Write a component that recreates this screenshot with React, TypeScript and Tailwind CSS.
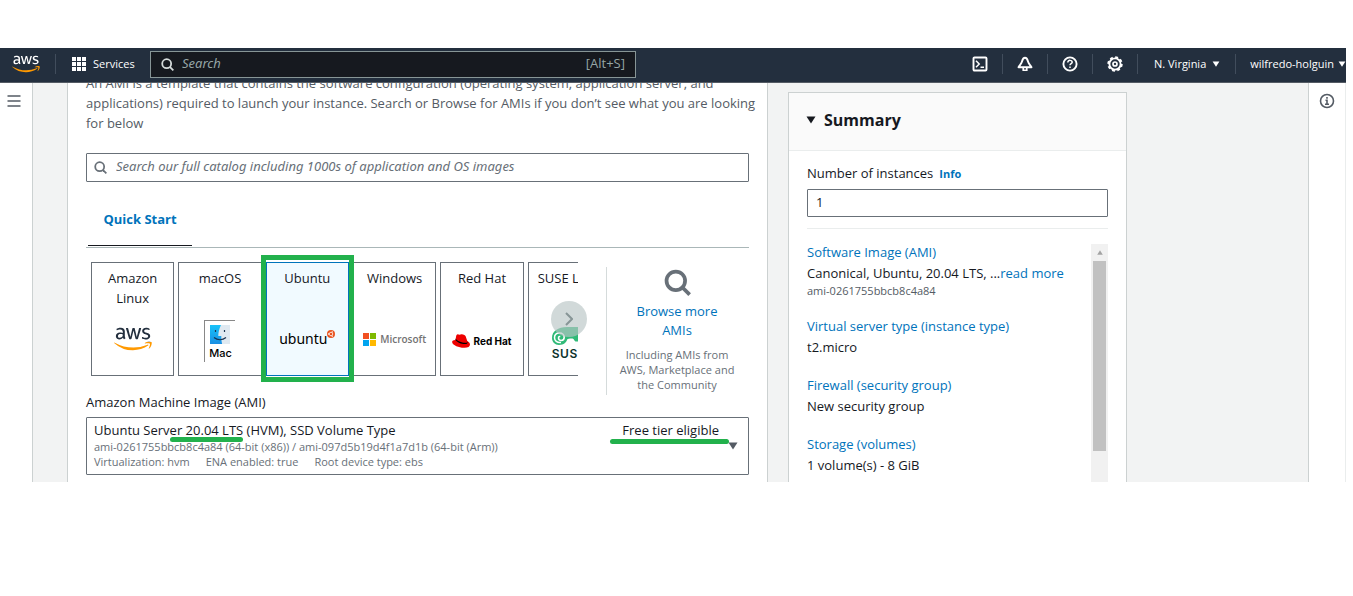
import React from "react";
import { FaAws } from "react-icons/fa";

function Caret({ className = "" }: { className?: string }) {
  return (
    <svg viewBox="0 0 10 8" className={className} aria-hidden="true">
      <path d="M0.5 0.5h9L5 7.5z" fill="currentColor" />
    </svg>
  );
}

function Magnifier({ className = "" }: { className?: string }) {
  return (
    <svg viewBox="0 0 16 16" className={className} fill="none" stroke="currentColor" strokeWidth="2.200" aria-hidden="true">
      <circle cx="7" cy="7" r="5.500" />
      <path d="M10.8 10.800 15.200 15.200" />
    </svg>
  );
}

function AwsMark({ id, ink, className = "" }: { id: string; ink: string; className?: string }) {
  return (
    <span className={className}>
      <svg width="0" height="0" className="absolute" aria-hidden="true">
        <linearGradient id={id} x1="0" y1="0" x2="0" y2="1">
          <stop offset="0.63" stopColor={ink} />
          <stop offset="0.63" stopColor="#ff9900" />
        </linearGradient>
      </svg>
      <FaAws className="block h-full w-full" fill={`url(#${id})`} />
    </span>
  );
}

function MacLogo() {
  return (
    <div className="flex h-[42px] w-[31px] flex-col items-center border-t border-l border-[#888] pt-1">
      <svg viewBox="0 0 20 19" className="h-[19px] w-5" aria-hidden="true">
        <defs>
          <linearGradient id="finder" x1="0" y1="0" x2="0" y2="1">
            <stop offset="0" stopColor="#17c3fa" />
            <stop offset="1" stopColor="#1a8fe3" />
          </linearGradient>
        </defs>
        <rect width="20" height="19" fill="#dfe9f1" />
        <path d="M0 0h11C9 4 8.300 8 8.300 11h3c0 3 .2 5 .8 8H0z" fill="url(#finder)" />
        <path d="M5.500 5v2M14.500 5v2M4 12.500c3.500 3 8.500 3 12 0" fill="none" stroke="#1b3350" strokeWidth="1.200" />
      </svg>
      <span className="mt-0.5 font-[Inter] text-[11px] leading-[14px] font-medium text-black">Mac</span>
    </div>
  );
}

function UbuntuLogo() {
  return (
    <div className="flex items-start text-black">
      <span className="font-['Noto_Sans'] text-sm leading-[18px]">ubuntu</span>
      <svg viewBox="0 0 16 16" className="h-2 w-2" aria-hidden="true">
        <circle cx="8" cy="8" r="8" fill="#e95420" />
        <circle cx="8" cy="8" r="3.500" fill="none" stroke="#fff" strokeWidth="1.500" />
        <circle cx="3" cy="8" r="1.300" fill="#fff" />
        <circle cx="10.500" cy="3.700" r="1.300" fill="#fff" />
        <circle cx="10.500" cy="12.300" r="1.300" fill="#fff" />
      </svg>
    </div>
  );
}

function MicrosoftLogo() {
  return (
    <div className="flex items-center gap-1">
      <svg viewBox="0 0 13 13" className="h-[13px] w-[13px]" aria-hidden="true">
        <path d="M0 0h6v6H0z" fill="#f25022" />
        <path d="M7 0h6v6H7z" fill="#7fba00" />
        <path d="M0 7h6v6H0z" fill="#00a4ef" />
        <path d="M7 7h6v6H7z" fill="#ffb900" />
      </svg>
      <span className="font-['Open_Sans'] text-[10px] leading-4 font-semibold text-[#737373]">Microsoft</span>
    </div>
  );
}

function RedHatLogo() {
  return (
    <div className="flex items-center gap-[3px] text-black">
      <svg viewBox="0 0 36 28" className="h-3.5 w-[18px]" aria-hidden="true">
        <path
          d="M7 12C1 12.500 0 14.500.3 16.500 1.500 23 15 28 25 27.500c7 0 11-2.500 11-6.500 0-3-2.500-5.500-5.500-7L27.500 5C26.500 2 25 2 21.500 1 18 0 16.500 1.500 15 1.500 13 1.500 12.500.2 10.500 1 9 1.500 8.500 3 8 6z"
          fill="#e00"
        />
        <path d="M7 12c3 5 14 9 21 8 3-.3 4-2.500 2.500-6 .4 3-1 4-4 3.700C19 17.500 10 14 7.400 9z" fill="#000" />
      </svg>
      <span className="font-[Inter] text-[10px] leading-4 font-bold">Red Hat</span>
    </div>
  );
}

function SuseLogo() {
  return (
    <div className="flex flex-col items-start">
      <svg viewBox="0 0 42 18" className="h-[18px] w-[42px]" aria-hidden="true">
        <path
          d="M0 11C0 4 6 0 15 0h12c6 0 11 3 13 7 .5 2-.5 5-3 5h-9c-2 0-2 2-1 2.500h-3.500c-1 0-1.500-3-3-3-2.500 0-2.500 0-5 .5-1 3-3.500 6-8.500 6C3 18 0 15 0 11z"
          fill="#30ba78"
        />
        <path
          d="M9 15.500c-4 .5-6.500-2-6.500-4.700C2.500 8 4.500 6 7.500 6s4.700 2 4.700 4.200c0 2-1.400 3.200-3 3.200S6.500 12.300 6.500 11s1-1.700 1.800-1.500"
          fill="none"
          stroke="#fff"
          strokeWidth="1.500"
        />
        <circle cx="34" cy="6" r="2" fill="#fff" />
      </svg>
      <span className="mt-[3px] font-[Inter] text-xs leading-3 font-semibold tracking-wider text-[#0c322c]">SUSE</span>
    </div>
  );
}

function Tile({ name, children, selected = false }: { name: string; children: React.ReactNode; selected?: boolean }) {
  return (
    <div className="relative">
      <button
        type="button"
        aria-pressed={selected}
        className={
          selected
            ? "relative block h-[114px] w-full border border-[#0073bb] bg-[#f1faff]"
            : "relative block h-[114px] w-full border border-[#687078] bg-white"
        }
      >
        <span className="absolute inset-x-0 top-[5px] px-2 leading-5">{name}</span>
        <span className="absolute inset-x-0 top-[54px] flex h-11 items-center justify-center">{children}</span>
      </button>
      {selected && <span className="pointer-events-none absolute -inset-x-[5px] -top-[7px] -bottom-[6px] z-10 border-[5px] border-[#22b14c]" />}
    </div>
  );
}

function HeaderIcon({ label, children }: { label: string; children: React.ReactNode }) {
  return (
    <button type="button" aria-label={label} className="flex h-5 w-[45px] items-center justify-center border-r border-[#414d5c]">
      <svg viewBox="0 0 16 16" className="h-4 w-4" fill="none" stroke="currentColor" strokeWidth="1.900">
        {children}
      </svg>
    </button>
  );
}

function TopBar() {
  return (
    <header className="flex h-[35px] items-center border-b border-[#545b64] bg-[#232f3e] pb-0.5 text-[11px] text-white">
      <a href="#home" aria-label="AWS" className="flex h-5 w-14 items-center border-r border-[#414d5c] pl-3">
        <AwsMark id="awsLight" ink="#ffffff" className="block h-[22px] w-7" />
      </a>
      <button type="button" className="flex w-[94px] items-center gap-[7px] pl-4">
        <svg viewBox="0 0 14 14" className="h-3.5 w-3.5" fill="currentColor" aria-hidden="true">
          <path d="M0 0h4v4H0zM5 0h4v4H5zM10 0h4v4h-4zM0 5h4v4H0zM5 5h4v4H5zM10 5h4v4h-4zM0 10h4v4H0zM5 10h4v4H5zM10 10h4v4h-4z" />
        </svg>
        Services
      </button>
      <label className="flex h-[27px] w-[486px] items-center border border-[#879596] bg-[#16191f] px-2.5 text-[13px] text-[#95a5a6]">
        <Magnifier className="h-[13px] w-[13px] text-[#d5dbdb]" />
        <input
          aria-label="Search"
          placeholder="Search"
          className="ml-2 min-w-0 flex-1 bg-transparent font-['Noto_Sans'] italic outline-none placeholder:text-[#95a5a6]"
        />
        <span>[Alt+S]</span>
      </label>
      <div className="ml-auto flex items-center whitespace-nowrap">
        <HeaderIcon label="CloudShell">
          <rect x="1.500" y="1.500" width="13" height="13" rx="1" />
          <path d="M4 4.800 7.200 8 4 11.200M8.500 11.200H12" strokeWidth="1.500" />
        </HeaderIcon>
        <HeaderIcon label="Notifications">
          <path d="M8 1.800C6 1.800 5.500 3.500 5 5.500 4.500 7.500 3 9 1.500 11.300h13C13 9 11.500 7.500 11 5.500 10.500 3.500 10 1.800 8 1.800z" strokeLinejoin="round" />
          <path d="M6.200 11.500v2.800h3.600v-2.800" strokeWidth="1.600" />
        </HeaderIcon>
        <HeaderIcon label="Help">
          <circle cx="8" cy="8" r="6.600" />
          <path d="M5.800 6.500c0-3 4.400-2.600 4.400-.2C10.200 7.700 8 7.700 8 9.300M8 10.500v1.600" strokeWidth="1.500" />
        </HeaderIcon>
        <HeaderIcon label="Settings">
          <circle cx="8" cy="8" r="5.600" />
          <circle cx="8" cy="8" r="6.800" strokeWidth="1.800" strokeDasharray="2.900 2.440" />
          <circle cx="8" cy="8" r="2" strokeWidth="1.700" />
        </HeaderIcon>
        <button type="button" className="flex h-5 items-center gap-1.5 border-r border-[#414d5c] pr-[15px] pl-4">
          N. Virginia
          <Caret className="h-1.5 w-2" />
        </button>
        <button type="button" className="flex items-center gap-1 pl-3.5">
          wilfredo-holguin
          <Caret className="h-1.5 w-2" />
        </button>
      </div>
    </header>
  );
}

function BrowseMore() {
  return (
    <div className="flex h-32 flex-1 flex-col items-center border-l border-[#d5dbdb] pr-0.5 text-center">
      <Magnifier className="mt-0.5 h-[27px] w-[27px] text-[#687078]" />
      <a href="#browse" className="mt-1.5 w-24 leading-[19px] text-[#0073bb]">
        Browse more AMIs
      </a>
      <p className="mt-[7px] w-[120px] text-[11px] leading-[15px] text-[#687078]">Including AMIs from AWS, Marketplace and the Community</p>
    </div>
  );
}

function ImagePanel() {
  return (
    <main className="max-w-[701px] flex-1 overflow-hidden border-x border-[#ccd1d1] bg-white px-[18px]">
      <p className="-mt-[10px] -mr-4 leading-5 text-[#545b64]">
        An AMI is a template that contains the software configuration (operating system, application server, and
        <br />
        applications) required to launch your instance. Search or Browse for AMIs if you don’t see what you are looking
        <br />
        for below
      </p>
      <label className="mt-5 flex h-[29px] items-center rounded-[1px] border border-[#687078] px-[7px] pb-px">
        <Magnifier className="h-[13px] w-[13px] text-[#687078]" />
        <input
          aria-label="Search catalog"
          placeholder="Search our full catalog including 1000s of application and OS images"
          className="ml-[9px] min-w-0 flex-1 font-['Noto_Sans'] italic outline-none placeholder:text-[#687078]"
        />
      </label>
      <div role="tablist" className="mt-[11px] border-b border-[#aab7b8] pb-px pl-0.5">
        <button type="button" role="tab" aria-selected="true" className="block h-[53px] w-[104px] border-b border-[#16191f] pt-0.5 font-bold text-[#0073bb]">
          Quick Start
        </button>
      </div>
      <div className="flex items-start">
        <div className="relative w-[492px] shrink-0">
          <div className="overflow-hidden pt-3.5 pb-2 pl-[5px]">
            <div className="grid w-[520px] grid-cols-6 gap-1">
              <Tile name="Amazon Linux">
                <AwsMark id="awsDark" ink="#232f3e" className="block h-[30px] w-[38px]" />
              </Tile>
              <Tile name="macOS">
                <div className="pt-1">
                  <MacLogo />
                </div>
              </Tile>
              <Tile name="Ubuntu" selected>
                <UbuntuLogo />
              </Tile>
              <Tile name="Windows">
                <MicrosoftLogo />
              </Tile>
              <Tile name="Red Hat">
                <div className="pt-1">
                  <RedHatLogo />
                </div>
              </Tile>
              <div className="relative h-[114px] border border-[#687078] whitespace-nowrap">
                <span className="absolute top-[5px] left-[9px] leading-5">SUSE Linux</span>
                <span className="absolute top-[64px] left-[23px]">
                  <SuseLogo />
                </span>
              </div>
            </div>
          </div>
          <button
            type="button"
            aria-label="Next"
            className="absolute top-[53px] -right-[9px] z-10 flex h-9 w-9 items-center justify-center rounded-full bg-[#b9c4c4]/65 text-[#879596]"
          >
            <svg viewBox="0 0 8 14" className="h-3.5 w-2" fill="none" stroke="currentColor" strokeWidth="2">
              <path d="m1 1 6 6-6 6" />
            </svg>
          </button>
        </div>
        <div className="mt-[19px] ml-7 flex flex-1">
          <BrowseMore />
        </div>
      </div>
      <div id="ami-label" className="-mt-[3px] leading-5 text-[#16191f]">
        Amazon Machine Image (AMI)
      </div>
      <button
        type="button"
        aria-haspopup="listbox"
        aria-labelledby="ami-label ami-value"
        className="mt-[5px] flex h-[58px] w-full items-center rounded-[1px] border border-[#687078] px-[7px] pb-0.5 text-left"
      >
        <span id="ami-value" className="flex-1">
          <span className="flex justify-between pr-1.5 leading-[18px]">
            <span>
              Ubuntu Serv
              <span className="relative">
                er 20.04 LTS
                <span className="absolute inset-x-0 top-4 h-[5px] rounded-full bg-[#22b14c]" />
              </span>{" "}
              (HVM), SSD Volume Type
            </span>
            <span className="relative">
              Free tier eligible
              <span className="absolute -right-2.5 top-[18px] -left-3 h-[5px] rounded-full bg-[#22b14c]" />
            </span>
          </span>
          <span className="block text-[11px] leading-[15px] text-[#687078]">
            ami-0261755bbcb8c4a84 (64-bit (x86)) / ami-097d5b19d4f1a7d1b (64-bit (Arm))
          </span>
          <span className="flex gap-4 text-[11px] leading-[15px] text-[#687078]">
            <span>Virtualization: hvm</span>
            <span>ENA enabled: true</span>
            <span>Root device type: ebs</span>
          </span>
        </span>
        <Caret className="mt-0.5 h-2 w-4 text-[#545b64]" />
      </button>
    </main>
  );
}

function SummaryItem({ title, children }: { title: string; children: React.ReactNode }) {
  return (
    <div className="mb-[17px]">
      <a href="#details" className="block leading-[22px] text-[#0073bb]">
        {title}
      </a>
      <div className="leading-5">{children}</div>
    </div>
  );
}

function Summary() {
  return (
    <aside className="mt-[9px] ml-5 w-[339px] shrink-0 overflow-hidden border border-b-0 border-[#ccd1d1] bg-white">
      <h2 className="flex h-[58px] items-center gap-2 border-b border-[#eaeded] bg-[#fafafa] px-[17px] pb-1 text-base font-bold">
        <Caret className="h-2 w-2.5" />
        Summary
      </h2>
      <div className="px-[18px] pt-3">
        <label htmlFor="count" className="leading-5">
          Number of instances
        </label>
        <a href="#info" className="ml-1.5 text-[11px] font-bold text-[#0073bb]">
          Info
        </a>
        <input id="count" defaultValue="1" className="mt-[5px] block h-7 w-full rounded-[1px] border border-[#687078] px-2 pb-0.5 outline-none" />
        <hr className="mt-[11px] border-[#eaeded]" />
        <div className="flex pt-3">
          <div className="flex-1">
            <SummaryItem title="Software Image (AMI)">
              Canonical, Ubuntu, 20.04 LTS, ...
              <a href="#more" className="text-[#0073bb]">
                read more
              </a>
              <div className="text-[11px] leading-[15px] text-[#545b64]">ami-0261755bbcb8c4a84</div>
            </SummaryItem>
            <SummaryItem title="Virtual server type (instance type)">t2.micro</SummaryItem>
            <SummaryItem title="Firewall (security group)">New security group</SummaryItem>
            <SummaryItem title="Storage (volumes)">1 volume(s) - 8 GiB</SummaryItem>
          </div>
          <div className="mt-[3px] flex w-[17px] flex-col items-center bg-[#f1f1f1]">
            <Caret className="mt-1.5 mb-1.5 h-[5px] w-2 rotate-180 text-[#a3a3a3]" />
            <div className="h-[190px] w-[13px] bg-[#c1c1c1]" />
          </div>
        </div>
      </div>
    </aside>
  );
}

export default function App() {
  return (
    <div className="min-h-screen bg-white pt-12 pr-[7px] font-['Open_Sans','Noto_Sans',sans-serif] text-[13px] text-[#16191f]">
      <TopBar />
      <div className="flex h-[399px] overflow-hidden bg-[#f2f3f3]">
        <nav className="flex w-[33px] shrink-0 justify-center border-r border-[#ccd1d1] bg-white pt-2.5 pr-0.5">
          <button type="button" aria-label="Open navigation" className="h-4 w-4">
            <svg viewBox="0 0 14 14" className="h-3.5 w-3.5" stroke="#545b64" strokeWidth="1.600">
              <path d="M.5 2h13M.5 7h13M.5 12h13" />
            </svg>
          </button>
        </nav>
        <div className="flex flex-1 pr-4 pl-[34px]">
          <ImagePanel />
          <Summary />
        </div>
        <div className="flex w-[38px] shrink-0 justify-center border-x border-l-[#ccd1d1] border-r-[#eaeded] bg-white pt-2.5">
          <button type="button" aria-label="Open help panel" className="h-4 w-4">
            <svg viewBox="0 0 16 16" className="h-4 w-4" fill="none" stroke="#545b64" strokeWidth="1.600">
              <circle cx="8" cy="8" r="6.500" />
              <path d="M8 4v1.700M6.500 7.300H8v4M6 11.300h4" />
            </svg>
          </button>
        </div>
      </div>
    </div>
  );
}
